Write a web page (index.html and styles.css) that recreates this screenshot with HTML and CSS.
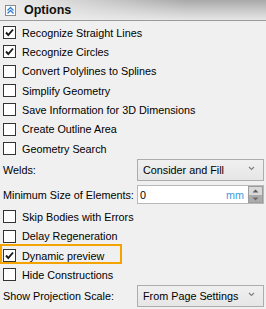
FILE: index.html
```html
<!DOCTYPE html>
<html>
<head>
<meta charset="utf-8">
<link rel="stylesheet" href="styles.css">
</head>
<body>
<div class="panel">
  <div class="header">
    <span class="hicon"><svg width="9" height="9" viewBox="0 0 9 9"><path d="M1.5 4.5 L4.5 1.5 L7.5 4.5 M1.5 7.5 L4.5 4.5 L7.5 7.5" fill="none" stroke="#2f7fd3" stroke-width="1.3"/></svg></span>
    <span class="title">Options</span>
  </div>
  <div class="body">
    <div class="row"><span class="cb"><svg width="11" height="11" viewBox="0 0 11 11"><path d="M2 5.5 L4.3 8 L9 2.5" fill="none" stroke="#1a1a1a" stroke-width="1.9"/></svg></span><span class="lbl">Recognize Straight Lines</span></div>
    <div class="row"><span class="cb"><svg width="11" height="11" viewBox="0 0 11 11"><path d="M2 5.5 L4.3 8 L9 2.5" fill="none" stroke="#1a1a1a" stroke-width="1.9"/></svg></span><span class="lbl">Recognize Circles</span></div>
    <div class="row"><span class="cb"></span><span class="lbl">Convert Polylines to Splines</span></div>
    <div class="row"><span class="cb"></span><span class="lbl">Simplify Geometry</span></div>
    <div class="row"><span class="cb"></span><span class="lbl">Save Information for 3D Dimensions</span></div>
    <div class="row"><span class="cb"></span><span class="lbl">Create Outline Area</span></div>
    <div class="row"><span class="cb"></span><span class="lbl">Geometry Search</span></div>

    <div class="field first">
      <span class="flabel">Welds:</span>
      <div class="select"><span>Consider and Fill</span><svg class="arrow" width="7" height="5" viewBox="0 0 7 5"><path d="M1 1 L3.5 3.5 L6 1" fill="none" stroke="#808080" stroke-width="1.2"/></svg></div>
    </div>
    <div class="field second">
      <span class="flabel">Minimum Size of Elements:</span>
      <div class="num">
        <span class="val">0</span>
        <span class="unit">mm</span>
        <span class="spin">
          <span class="up"><svg width="7" height="4" viewBox="0 0 7 4"><path d="M0.5 3.5 L3.5 0.5 L6.5 3.5 Z" fill="#5a5a5a"/></svg></span>
          <span class="down"><svg width="7" height="4" viewBox="0 0 7 4"><path d="M0.5 0.5 L3.5 3.5 L6.5 0.5 Z" fill="#6a6a6a"/></svg></span>
        </span>
      </div>
    </div>

    <div class="row gapped"><span class="cb"></span><span class="lbl">Skip Bodies with Errors</span></div>
    <div class="row"><span class="cb"></span><span class="lbl">Delay Regeneration</span></div>
    <div class="row hl"><span class="cb"><svg width="11" height="11" viewBox="0 0 11 11"><path d="M2 5.5 L4.3 8 L9 2.5" fill="none" stroke="#1a1a1a" stroke-width="1.9"/></svg></span><span class="lbl">Dynamic preview</span></div>
    <div class="row"><span class="cb"></span><span class="lbl">Hide Constructions</span></div>

    <div class="field last">
      <span class="flabel">Show Projection Scale:</span>
      <div class="select"><span>From Page Settings</span><svg class="arrow" width="7" height="5" viewBox="0 0 7 5"><path d="M1 1 L3.5 3.5 L6 1" fill="none" stroke="#808080" stroke-width="1.2"/></svg></div>
    </div>
  </div>
</div>
</body>
</html>
```

FILE: styles.css
```css
html, body {
  margin: 0;
  padding: 0;
  background: #f0f0f0;
}
body {
  font-family: "Liberation Sans", Arial, sans-serif;
  font-size: 10.8px;
  color: #000;
  width: 266px;
  height: 309px;
  overflow: hidden;
}
.panel {
  width: 266px;
}
.header {
  height: 20px;
  border-bottom: 1px solid #9a9a9a;
  display: flex;
  align-items: center;
  background:
    linear-gradient(to right, rgba(238,238,238,1) 0%, rgba(238,238,238,0.6) 30%, rgba(238,238,238,0) 70%),
    linear-gradient(to bottom, #a9a9a9 0%, #c9c9c9 50%, #e6e6e6 100%);
}
.hicon {
  width: 11px;
  height: 11px;
  box-sizing: border-box;
  border: 1px solid #8a8a8a;
  background: #fff;
  margin-left: 5px;
  display: flex;
  align-items: center;
  justify-content: center;
}
.title {
  font-weight: bold;
  font-size: 12.5px;
  margin-left: 8px;
  color: #111;
}
.body {
  padding: 2px 2px 0 3px;
  display: flex;
  flex-direction: column;
}
.row {
  height: 19.33px;
  display: flex;
  align-items: center;
  position: relative;
}
.cb {
  width: 13px;
  height: 13px;
  box-sizing: border-box;
  border: 1px solid #333;
  background: #fff;
  display: flex;
  align-items: center;
  justify-content: center;
  flex: none;
}
.lbl {
  margin-left: 6px;
  white-space: nowrap;
}
.row.gapped {
  margin-top: 3px;
}
.row.hl::after {
  content: "";
  position: absolute;
  left: -3px;
  top: -2px;
  width: 122px;
  height: 20px;
  box-sizing: border-box;
  border: 2px solid #f5a300;
}
.field {
  display: grid;
  grid-template-columns: 134px 127px;
  align-items: center;
}
.field.first {
  margin-top: 1px;
}
.field.second {
  margin-top: 4px;
}
.field.last {
  margin-top: 0.5px;
}
.flabel {
  white-space: nowrap;
}
.select {
  height: 22px;
  box-sizing: border-box;
  border: 1px solid #adadad;
  background: linear-gradient(to bottom, #f0f0f0, #e6e6e6);
  display: flex;
  align-items: center;
  justify-content: space-between;
  padding: 0 8px 0 5px;
}
.select .arrow {
  margin-top: -3px;
}
.num {
  height: 19px;
  box-sizing: border-box;
  border: 1px solid #b9b9b9;
  background: #fff;
  display: flex;
  align-items: center;
  padding-left: 2px;
}
.val {
  flex: 1;
}
.unit {
  color: #3c9be2;
  margin-right: 4px;
}
.spin {
  width: 15px;
  height: 17px;
  box-sizing: border-box;
  border: 1px solid #9c9c9c;
  display: flex;
  flex-direction: column;
}
.spin .up, .spin .down {
  flex: 1;
  display: flex;
  align-items: center;
  justify-content: center;
}
.spin .up {
  background: #d9d9d9;
}
.spin .down {
  background: #ababab;
}
```
